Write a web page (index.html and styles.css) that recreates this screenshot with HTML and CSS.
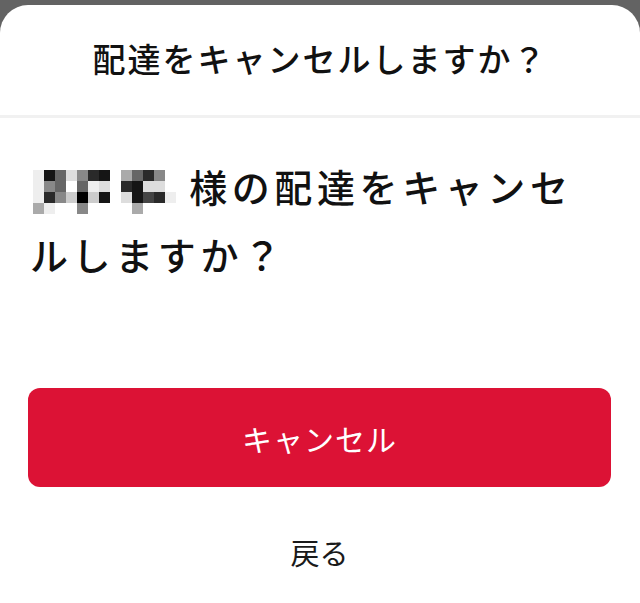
FILE: index.html
```html
<!DOCTYPE html>
<html>
<head>
    <title>配達をキャンセル</title>
    <link rel="stylesheet" href="styles.css">
</head>
<body>
    <div class="sheet">
        <div class="sheet-header">
            <h1>配達をキャンセルしますか？</h1>
        </div>
        <div class="sheet-body">
            <p class="message"><span class="masked-name"><span class="px g1"></span><span class="px g9"></span><span class="px g6"></span><span class="px g2"></span><span class="px g5"></span><span class="px g8"></span><span class="px g9"></span><span class="px g0"></span><span class="px g4"></span><span class="px g6"></span><span class="px g8"></span><span class="px g5"></span><span class="px g0"></span><span class="px g1"></span><span class="px g5"></span><span class="px g6"></span><span class="px g0"></span><span class="px g6"></span><span class="px g1"></span><span class="px g2"></span><span class="px g0"></span><span class="px g8"></span><span class="px g9"></span><span class="px g2"></span><span class="px g2"></span><span class="px g0"></span><span class="px g1"></span><span class="px g8"></span><span class="px g5"></span><span class="px g3"></span><span class="px g10"></span><span class="px g3"></span><span class="px g9"></span><span class="px g0"></span><span class="px g2"></span><span class="px g9"></span><span class="px g7"></span><span class="px g8"></span><span class="px g1"></span><span class="px g4"></span><span class="px g1"></span><span class="px g0"></span><span class="px g0"></span><span class="px g5"></span><span class="px g0"></span><span class="px g0"></span><span class="px g0"></span><span class="px g0"></span><span class="px g4"></span><span class="px g0"></span><span class="px g0"></span><span class="px g0"></span></span> 様の配達をキャンセルしますか？</p>
        </div>
        <div class="actions">
            <button class="cancel-button">キャンセル</button>
            <button class="back-button">戻る</button>
        </div>
    </div>
</body>
</html>
```

FILE: styles.css
```css
html, body {
    height: 100%;
}
body {
    margin: 0;
    background-color: #636363;
    font-family: 'Noto Sans CJK JP', 'Noto Sans', sans-serif;
    color: #111;
    overflow: hidden;
}
.sheet {
    margin-top: 5px;
    height: calc(100% - 5px);
    background-color: #fff;
    border-radius: 28px 28px 0 0;
}
.sheet-header {
    height: 110px;
    display: flex;
    align-items: center;
    justify-content: center;
    border-bottom: 3px solid #f1f1f1;
}
h1 {
    margin: 0 0 4px;
    font-size: 33px;
    font-weight: 500;
    letter-spacing: 2px;
    line-height: 1;
}
.sheet-body {
    padding: 34px 30px 0 30px;
}
.message {
    margin: 0;
    font-size: 38px;
    font-weight: 500;
    letter-spacing: 4.6px;
    line-height: 68px;
}
.masked-name {
    display: inline-grid;
    grid-template-columns: repeat(13, 11px);
    grid-auto-rows: 11px;
    vertical-align: middle;
    margin-left: 3px;
}
.px { display: block; }
.g0 { background-color: #fff; }
.g1 { background-color: #eee; }
.g2 { background-color: #ddd; }
.g3 { background-color: #ccc; }
.g4 { background-color: #aaa; }
.g5 { background-color: #888; }
.g6 { background-color: #666; }
.g7 { background-color: #444; }
.g8 { background-color: #2a2a2a; }
.g9 { background-color: #151515; }
.g10 { background-color: #000; }
.actions {
    padding: 100px 29px 0 28px;
    display: flex;
    flex-direction: column;
    align-items: center;
}
button {
    font-family: inherit;
    border: none;
    cursor: pointer;
}
.cancel-button {
    width: 100%;
    height: 99px;
    background-color: #dc1235;
    color: #fff;
    font-size: 30px;
    letter-spacing: 1px;
    border-radius: 12px;
}
.back-button {
    margin-top: 45px;
    background: none;
    color: #1a1a1a;
    font-size: 29px;
    line-height: 40px;
    padding: 0 20px;
}
```
